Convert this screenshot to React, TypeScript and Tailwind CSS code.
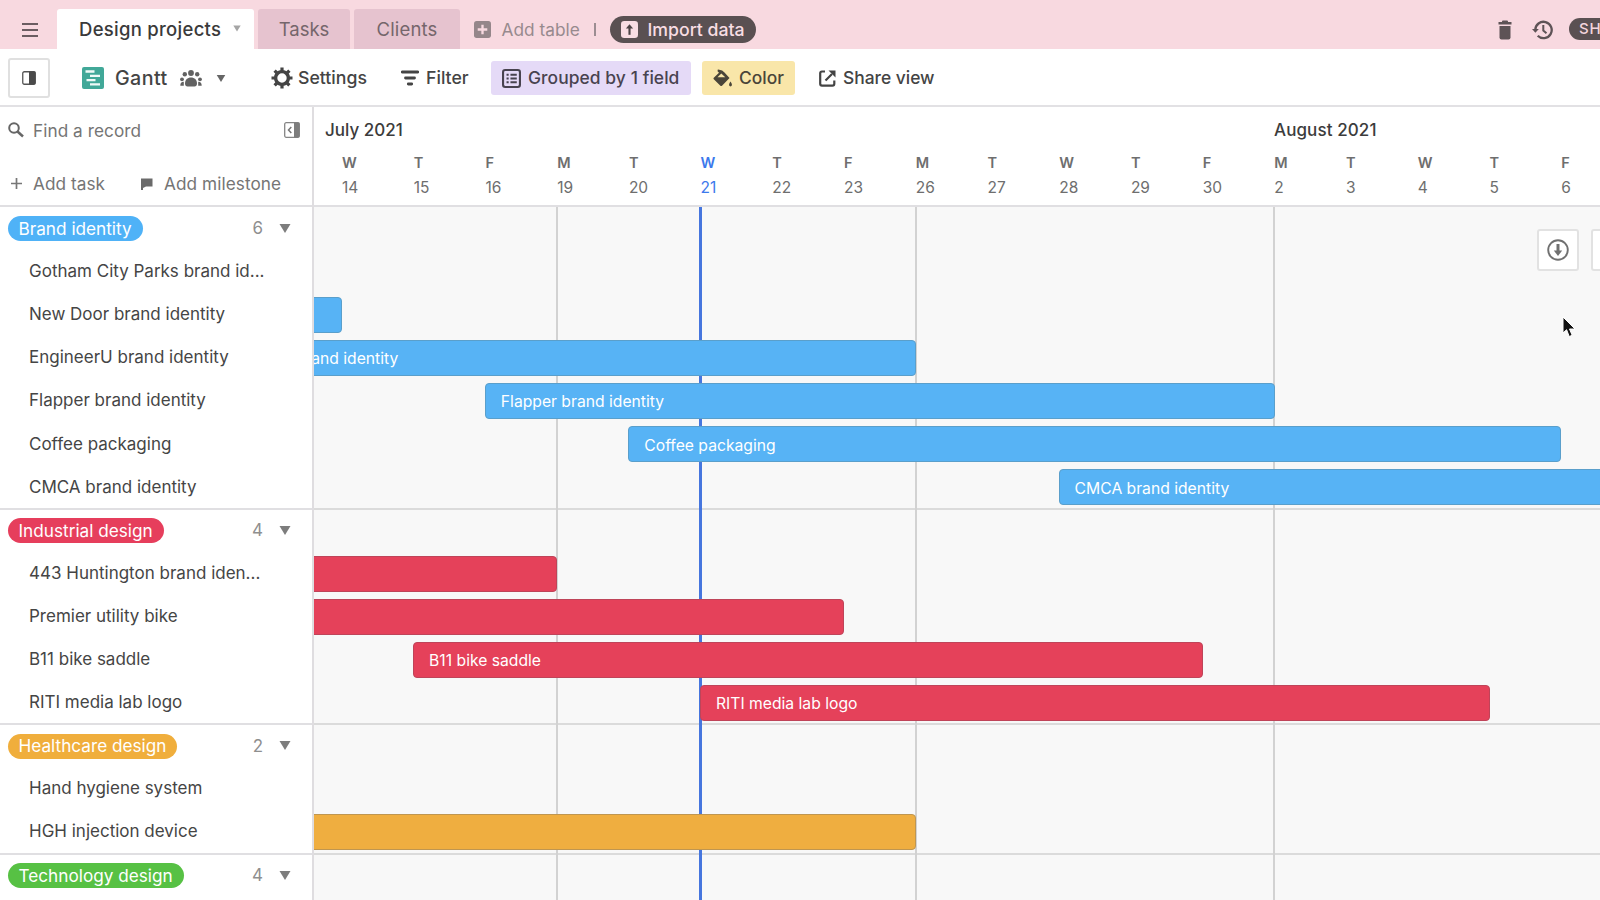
import React from 'react';

const DAY_WIDTH = 71.72;
const FIRST_DAY = 27.7;

type Task = { name: string; label?: string; start?: number; end?: number };
type Group = { name: string; count: number; pill: string; bar: string; tasks: Task[] };

const DAYS: [string, number][] = [
  ['W', 14], ['T', 15], ['F', 16],
  ['M', 19], ['T', 20], ['W', 21], ['T', 22], ['F', 23],
  ['M', 26], ['T', 27], ['W', 28], ['T', 29], ['F', 30],
  ['M', 2], ['T', 3], ['W', 4], ['T', 5], ['F', 6],
];

const TODAY = 5;
const WEEK_STARTS = [3, 8, 13];

// start / end are working-day offsets from July 14
const GROUPS: Group[] = [
  {
    name: 'Brand identity',
    count: 6,
    pill: 'bg-[#4fb2f7]',
    bar: 'bg-[#57b3f5] border-[#5a9fcb]',
    tasks: [
      { name: 'Gotham City Parks brand id...' },
      { name: 'New Door brand identity', label: '', start: -9, end: 0 },
      { name: 'EngineerU brand identity', start: -2, end: 8 },
      { name: 'Flapper brand identity', start: 2, end: 13 },
      { name: 'Coffee packaging', start: 4, end: 17 },
      { name: 'CMCA brand identity', start: 10, end: 24 },
    ],
  },
  {
    name: 'Industrial design',
    count: 4,
    pill: 'bg-[#e63e5c]',
    bar: 'bg-[#e5415a] border-[#bf4459]',
    tasks: [
      { name: '443 Huntington brand iden...', label: '', start: -9, end: 3 },
      { name: 'Premier utility bike', label: '', start: -9, end: 7 },
      { name: 'B11 bike saddle', start: 1, end: 12 },
      { name: 'RITI media lab logo', start: 5, end: 16 },
    ],
  },
  {
    name: 'Healthcare design',
    count: 2,
    pill: 'bg-[#f0ae3c]',
    bar: 'bg-[#efae40] border-[#bf9650]',
    tasks: [
      { name: 'Hand hygiene system' },
      { name: 'HGH injection device', label: '', start: -9, end: 8 },
    ],
  },
  { name: 'Technology design', count: 4, pill: 'bg-[#57c144]', bar: '', tasks: [] },
];

const Caret = ({ className }: { className: string }) => (
  <svg viewBox="0 0 12 9" className={className} fill="currentColor"><path d="M0.5 0h11L6 9z" /></svg>
);

const TopBar = () => (
  <header className="flex h-[49px] shrink-0 items-center bg-[#f8d9e0] pt-[9px] text-[18.500px]">
    <svg viewBox="0 0 16 14" className="mt-px ml-[22px] h-[14px] w-4 text-[#6b5d61]" stroke="currentColor" strokeWidth="2">
      <path d="M0 1h16M0 7h16M0 13h16" />
    </svg>
    <div className="ml-[19px] flex h-10 w-[197px] items-center rounded-t-[3px] bg-white pt-px pl-[22px] font-medium text-[#3a3a3a]">
      <span className="w-[154px] whitespace-nowrap tracking-[0.280px]">Design projects</span>
      <Caret className="mb-[3px] h-[7px] w-2 text-[#a5a5a5]" />
    </div>
    <div className="ml-1 flex h-10 w-[92px] items-center justify-center rounded-t-[3px] bg-[#e6c3cf] pt-[2px] text-[#75666b]">Tasks</div>
    <div className="ml-1 flex h-10 w-[106px] items-center justify-center rounded-t-[3px] bg-[#e6c3cf] pt-[2px] tracking-[0.150px] text-[#75666b]">Clients</div>
    <svg viewBox="0 0 16 16" className="mt-px ml-[14px] size-[17px]">
      <rect width="16" height="16" rx="2.5" fill="#95868a" />
      <path d="M8 3.5v9M3.5 8h9" stroke="#f8d9e0" strokeWidth="2.2" />
    </svg>
    <span className="ml-[10.500px] w-[92.500px] pt-[2px] text-[17.300px] whitespace-nowrap text-[#978a8e]">Add table</span>
    <span className="mt-px h-[13px] w-[1.5px] bg-[#9c8d92]" />
    <div className="mt-px ml-[14px] flex h-[27px] w-[146px] items-center rounded-full bg-[#5a5052] pl-[11px] font-medium text-[#f8dde3]">
      <svg viewBox="0 0 16 16" className="size-[17px]">
        <rect width="16" height="16" rx="3" fill="#f8dde3" />
        <path d="M8 13V6" stroke="#4b4244" strokeWidth="2" />
        <path d="M4.6 7L8 3l3.400 4z" fill="#4b4244" />
      </svg>
      <span className="ml-[10px] pt-px text-[17.700px] whitespace-nowrap">Import data</span>
    </div>
    <svg viewBox="0 0 14 20" className="mt-px ml-auto h-5 w-[14px] shrink-0 text-[#5e5356]" fill="currentColor">
      <path d="M4 1.500Q4 0.500 5 0.500h4Q10 0.500 10 1.500V2h3.500v2.500H0.500V2H4z" />
      <path d="M1.500 6h11v11.500Q12.500 19.500 10.500 19.500h-7Q1.500 19.500 1.500 17.500z" />
    </svg>
    <svg viewBox="0 0 21 20" className="mt-px ml-5 h-5 w-[21px] shrink-0 text-[#5e5356]" fill="none" stroke="currentColor">
      <path d="M3.300 10a8.200 8.200 0 1 1 2.400 5.800" strokeWidth="2.300" />
      <path d="M0 9h6.800L3.400 12.800z" fill="currentColor" stroke="none" />
      <path d="M11.300 5v5.600l3.200 2.700" strokeWidth="2" />
    </svg>
    <div className="ml-4 flex h-[22px] w-[31px] shrink-0 items-center overflow-hidden rounded-l-full bg-[#5a5052] pl-[10px] text-[15px] font-medium tracking-[0.8px] text-[#f3d5dc]">SHARE</div>
  </header>
);

const Toolbar = () => (
  <div className="flex h-[58px] shrink-0 items-center border-b-2 border-[#e2e1e4] bg-white pt-px text-[17.400px] font-medium text-[#444] whitespace-nowrap">
    <button className="ml-2 flex h-10 w-[42px] items-center justify-center rounded-[3px] border-2 border-[#e0e0e0]">
      <svg viewBox="0 0 14 14" className="size-[14px]">
        <rect x="0.750" y="0.750" width="12.500" height="12.500" rx="1.500" fill="none" stroke="#555" strokeWidth="1.300" />
        <path d="M7 0.500h5.500q1 0 1 1v11q0 1-1 1H7z" fill="#4a4a4a" />
      </svg>
    </button>
    <svg viewBox="0 0 22 22" className="mt-px ml-8 size-[22px]">
      <rect width="22" height="22" rx="2" fill="#41a898" />
      <path d="M3.500 4.500h9M8 8.800h10M4.500 13.100h9M8 17.400h10" stroke="#effaf7" strokeWidth="2.300" />
    </svg>
    <span className="ml-[11px] w-[65px] pt-[3px] text-[19.700px] tracking-[0.400px]">Gantt</span>
    <svg viewBox="0 0 22 17" className="mt-px h-[17px] w-[22px] text-[#626262]" fill="currentColor">
      <circle cx="11" cy="3" r="2.900" />
      <circle cx="4.800" cy="4.300" r="2.200" />
      <circle cx="17.200" cy="4.300" r="2.200" />
      <circle cx="2" cy="9.300" r="1.900" />
      <circle cx="20" cy="9.300" r="1.900" />
      <path d="M11 7.500c3.500 0 6 2.300 6 6 0 2-1 3-2.500 3h-7C6 16.500 5 15.500 5 13.500 5 9.800 7.500 7.500 11 7.500z" />
      <path d="M0.300 15.800c0-2.500 1-4 3.500-4v4zM21.700 15.800c0-2.500-1-4-3.500-4v4z" />
    </svg>
    <Caret className="mt-px ml-[14px] h-[7px] w-[10px] text-[#666]" />
    <svg viewBox="-11 -11 22 22" className="mt-px ml-[45px] size-[22px] text-[#444]" stroke="currentColor" fill="none">
      <circle r="6.400" strokeWidth="3.400" />
      <path d="M0-10.500V-7M0 10.500V7M-10.500 0H-7M10.500 0H7M-7.400-7.400L-5-5M7.400 7.400L5 5M-7.400 7.400L-5 5M7.400-7.400L5-5" strokeWidth="3.200" />
    </svg>
    <span className="ml-[5px] w-[103px] pt-[2px] text-[17.700px]">Settings</span>
    <svg viewBox="0 0 18 16" className="mt-px h-4 w-[18px]" stroke="#444" strokeWidth="2.800" strokeLinecap="round">
      <path d="M1.300 2h15.400M4.500 8h9M7.300 14h3.400" />
    </svg>
    <span className="ml-[7px] w-[65px] pt-[2px] text-[17.700px]">Filter</span>
    <button className="mt-px flex h-[34px] w-[200px] items-center rounded-[3px] bg-[#e5daf7] pl-[11px] text-[#48434f]">
      <svg viewBox="0 0 18 18" className="size-[19px]" fill="none" stroke="currentColor">
        <rect x="1" y="1" width="16" height="16" rx="2" strokeWidth="2" />
        <path d="M4.300 5.500h2M4.300 9h2M4.300 12.500h2M8 5.500h6M8 9h6M8 12.500h6" strokeWidth="1.800" />
      </svg>
      <span className="ml-[7px] pt-px tracking-[0.080px]">Grouped by 1 field</span>
    </button>
    <button className="mt-px ml-[11px] flex h-[34px] w-[93px] items-center rounded-[3px] bg-[#f9e6a9] pl-[11px] text-[#4a4539]">
      <svg viewBox="0 0 20 18" className="h-[18px] w-5" fill="currentColor">
        <path d="M5 1.200L8.500 4.500" stroke="currentColor" strokeWidth="2" />
        <path d="M4.500 0.800Q9 0 11.500 3.500L16.500 9 9 16.700Q8.200 17.300 7.400 16.700L0.800 10.300Q0 9.500 0.800 8.700L6 3.800z" />
        <path d="M8.300 4.500L4.500 8.300h7.800z" fill="#f9e6a9" />
        <path d="M17.500 12.500q2.300 3.200 0.900 4.500-0.900 0.800-1.800 0-1.400-1.300 0.900-4.500z" />
      </svg>
      <span className="ml-[6px] pt-px">Color</span>
    </button>
    <svg viewBox="0 0 17 17" className="mt-px ml-6 size-[17px]" fill="none" stroke="#444" strokeWidth="2.200">
      <path d="M6 1.500H3Q1.200 1.500 1.200 3.300v10.500q0 1.800 1.800 1.800h10.500q1.800 0 1.800-1.800V10.500M6.500 10.500L13 4" />
      <path d="M9.500 0.500h7v7z" fill="#444" stroke="none" />
    </svg>
    <span className="ml-[7px] pt-[2px]">Share view</span>
  </div>
);

const Sidebar = () => (
  <aside className="flex w-[314px] shrink-0 flex-col border-r-2 border-[#dfdde0] bg-white text-[17px] whitespace-nowrap">
    <div className="h-[100px] shrink-0 border-b-2 border-[#e0dfe2] text-[17.200px] text-[#757575]">
      <div className="flex h-[46px] items-center">
        <svg viewBox="0 0 16 16" className="ml-2 size-4" fill="none" stroke="#666" strokeWidth="2">
          <circle cx="6" cy="6" r="4.800" />
          <path d="M9.500 9.500L15 14.500" strokeWidth="2.500" />
        </svg>
        <span className="ml-[9px] pt-px tracking-[0.060px]">Find a record</span>
        <svg viewBox="0 0 16 16" className="mr-3 ml-auto size-4">
          <rect x="0.700" y="0.700" width="14.600" height="14.600" rx="1.500" fill="none" stroke="#858585" strokeWidth="1.300" />
          <path d="M10 0.500h4.500q1 0 1 1v13q0 1-1 1H10z" fill="#7d7d7d" />
          <path d="M7.300 5L4.500 8l2.800 3" fill="none" stroke="#777" strokeWidth="1.500" />
        </svg>
      </div>
      <div className="mt-[6px] flex h-[49px] items-center">
        <svg viewBox="0 0 11 11" className="mb-px ml-[11px] size-[11px]" stroke="#777" strokeWidth="1.700">
          <path d="M5.500 0v11M0 5.500h11" />
        </svg>
        <span className="ml-[11px] w-[108px] tracking-[0.060px]">Add task</span>
        <svg viewBox="0 0 12 12" className="size-3" fill="#6a6a6a">
          <path d="M0 0.500h11.500v8H5L2 10v2H0z" />
        </svg>
        <span className="ml-[11px] tracking-[0.080px]">Add milestone</span>
      </div>
    </div>
    {GROUPS.map((group, i) => (
      <div key={group.name} className={i > 0 ? '-mb-px shrink-0 border-t-2 border-[#e0dfe2]' : '-mb-px shrink-0'}>
        <div className={`flex items-center pr-[21px] pl-[7.500px] ${i > 0 ? 'h-[42px]' : 'h-[43.400px]'}`}>
          <span className={`flex h-[25px] items-center rounded-full px-[11px] text-[17.200px] text-white ${group.pill}`}>{group.name}</span>
          <span className="mr-4 ml-auto text-[#8f8f8f]">{group.count}</span>
          <Caret className="mb-px h-[9px] w-3 text-[#7d7d7d]" />
        </div>
        {group.tasks.map(task => (
          <div key={task.name} className="flex h-[43.100px] items-center pl-[29px] text-[#454545]">{task.name}</div>
        ))}
      </div>
    ))}
  </aside>
);

const Timeline = () => (
  <section className="relative flex min-w-0 grow flex-col overflow-hidden bg-[#f8f8f8] whitespace-nowrap">
    <div className="h-[100px] shrink-0 border-b-2 border-[#e0dfe2] bg-white">
      <div className="flex h-[46px] items-center pt-[2px] text-[17px] font-medium text-[#3c3c3c]">
        <span className="ml-[11px] w-[949px] shrink-0">July 2021</span>
        <span className="tracking-[0.100px]">August 2021</span>
      </div>
      <div className="-mt-px flex pl-[28px]">
        {DAYS.map(([letter, day], i) => (
          <div key={i} className={`w-[71.720px] shrink-0 ${i === TODAY ? 'text-[#3c79ec]' : 'text-[#6e6e6e]'}`}>
            <div className="h-[22px] text-[14.500px] leading-[22px] font-semibold">{letter}</div>
            <div className="mt-[2px] h-[24px] text-[15.500px] leading-[24px]">{day}</div>
          </div>
        ))}
      </div>
    </div>

    <div className="relative grow">
      {/* Week separators and today marker */}
      {WEEK_STARTS.map(d => (
        <div key={d} className="absolute inset-y-0 w-[2px] bg-[#d2d2d2]" style={{ left: FIRST_DAY + d * DAY_WIDTH - 0.8 }} />
      ))}
      <div className="absolute inset-y-0 w-[3px] bg-[#4676de]" style={{ left: FIRST_DAY + TODAY * DAY_WIDTH - 1.3 }} />

      {GROUPS.map((group, i) => (
        <div key={group.name} className={i > 0 ? '-mb-px border-t-2 border-[#dbdbdb]' : '-mb-px'}>
          <div className={i > 0 ? 'h-[42px]' : 'h-[43.400px]'} />
          {group.tasks.map(task => (
            <div key={task.name} className="relative flex h-[43.100px] items-center">
              {task.start !== undefined && task.end !== undefined && (
                <div
                  className={`absolute flex h-9 items-center rounded-[4px] border pt-[2px] pl-[15px] text-[15.700px] text-white ${group.bar}`}
                  style={{ left: FIRST_DAY + task.start * DAY_WIDTH - 0.3, width: (task.end - task.start) * DAY_WIDTH + 0.8 }}
                >
                  {task.label ?? task.name}
                </div>
              )}
            </div>
          ))}
        </div>
      ))}

      {/* Floating controls */}
      <div className="absolute top-[22px] left-[1223px] flex gap-[12px]">
        <button className="flex size-[42px] items-center justify-center rounded-[3px] border-2 border-[#e2e2e2] bg-white">
          <svg viewBox="0 0 22 22" className="size-[22px]" fill="none" stroke="#707070">
            <circle cx="11" cy="11" r="9.800" strokeWidth="1.900" />
            <path d="M11 5v8" strokeWidth="3" />
            <path d="M6.800 11.500h8.400L11 17z" fill="#707070" stroke="none" />
          </svg>
        </button>
        <button className="size-[42px] rounded-[3px] border-2 border-[#e2e2e2] bg-white" />
      </div>

      <svg viewBox="0 0 14 22" className="absolute top-[109px] left-[1248px] h-[22px] w-[14px]">
        <path d="M1 1v16l3.600-3.300L7.200 20.500l3-1.200-2.700-6.300H13z" fill="#111" stroke="#fff" strokeWidth="1" />
      </svg>
    </div>
  </section>
);

const App: React.FC = () => (
  <div className="flex h-[900px] w-[1600px] flex-col overflow-hidden bg-white font-['Inter',sans-serif]">
    <TopBar />
    <Toolbar />
    <main className="flex min-h-0 grow">
      <Sidebar />
      <Timeline />
    </main>
  </div>
);

export default App;
